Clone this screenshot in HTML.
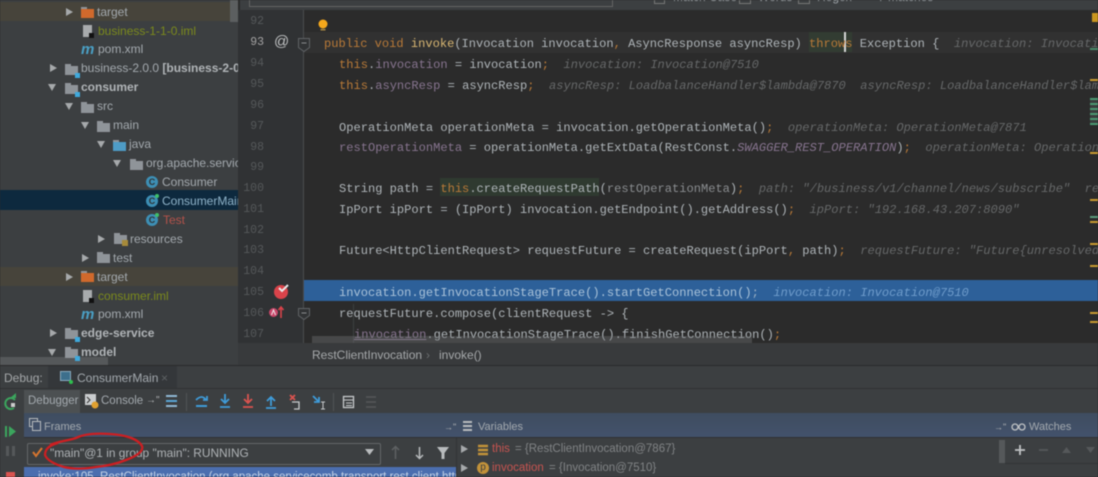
<!DOCTYPE html>
<html><head><meta charset="utf-8"><style>
html,body{margin:0;padding:0;background:#2b2b2b}
#r{position:relative;width:1098px;height:477px;overflow:hidden;background:#2b2b2b;font-family:"Liberation Sans",sans-serif;filter:blur(.55px)}
.a{position:absolute}
.t{position:absolute;white-space:nowrap;font-size:12px;line-height:16px;color:#a3a9ae}
.b{font-weight:bold;color:#b0b4b7}
.c{position:absolute;white-space:pre;font-family:"Liberation Mono",monospace;font-size:12.07px;line-height:16px;color:#aeb4b8;left:339px}
.n{position:absolute;left:240px;width:24px;text-align:right;font-family:"Liberation Mono",monospace;font-size:11.5px;line-height:14px;color:#55585a}
.k{color:#b97a38}.i{font-style:italic;color:#666869}.p{color:#87748f}.d{color:#707374}
.tri-r{position:absolute;width:0;height:0;border-left:7px solid #a6a9ab;border-top:4px solid transparent;border-bottom:4px solid transparent}
.tri-d{position:absolute;width:0;height:0;border-top:7px solid #a6a9ab;border-left:4.5px solid transparent;border-right:4.5px solid transparent}
.f{position:absolute;width:13px;height:9px;background:#8f9499}
.f:before{content:"";position:absolute;left:0;top:-2px;width:6px;height:2px;background:#8f9499}
.mod:after{content:"";position:absolute;right:-2px;bottom:-3px;width:5px;height:5px;background:#3fa9dc}
.cl{position:absolute;width:12px;height:12px;border-radius:50%;background:#3d8fb5;color:#2f3335;font:bold 9px/12px "Liberation Sans",sans-serif;text-align:center}
.g:after{content:"";position:absolute;right:-1px;top:-1px;width:4px;height:4px;background:#3fbf6a;border-radius:50%}
.m{position:absolute;font:italic bold 15px/14px "Liberation Sans",sans-serif;color:#4a9fc4}
.iml{position:absolute;width:9px;height:12px;background:#a8abad}
.iml:after{content:"";position:absolute;right:-2px;bottom:-1px;width:5px;height:5px;background:#111}
.mk{position:absolute;left:1090px;width:8px;height:2px;background:#c99a2e}
</style></head><body><div id="r">

<!-- top toolbar strip -->
<div class="a" style="left:240px;top:0;width:858px;height:10px;background:#3c3f41"></div>
<div class="a" style="left:249px;top:-4px;width:362px;height:9px;border:1px solid #646464"></div>
<div class="a" style="left:654px;top:-4px;width:9px;height:6px;border:1px solid #777"></div>
<div class="t" style="left:673px;top:-11px">Match Case</div>
<div class="a" style="left:739px;top:-4px;width:10px;height:6px;border:1px solid #777"></div>
<div class="t" style="left:758px;top:-11px">Words</div>
<div class="a" style="left:798px;top:-4px;width:10px;height:6px;border:1px solid #777"></div>
<div class="t" style="left:817px;top:-11px">Regex</div>
<div class="t" style="left:878px;top:-11px">7 matches</div>

<!-- project tree -->
<div class="a" style="left:0;top:0;width:238px;height:365px;background:#3c3f41"></div>
<div class="a" style="left:0;top:2px;width:238px;height:19px;background:#47443b"></div>
<div class="a" style="left:0;top:267px;width:238px;height:19px;background:#47443b"></div>
<div class="a" style="left:0;top:190px;width:238px;height:20px;background:#0d293e"></div>
<div class="a" style="left:230px;top:0;width:8px;height:22px;background:#5c5f60"></div>
<div class="a" style="left:0;top:357px;width:108px;height:8px;background:#55585a"></div>

<div class="tri-r" style="left:66px;top:8px"></div>
<div class="f" style="left:81px;top:9px;background:#d0692c"></div>
<div class="t" style="left:97px;top:4px">target</div>
<div class="iml" style="left:83px;top:25px"></div>
<div class="t" style="left:98px;top:23px;color:#7b8a1c">business-1-1-0.iml</div>
<div class="m" style="left:81px;top:43px">m</div>
<div class="t" style="left:98px;top:41px">pom.xml</div>
<div class="tri-r" style="left:50px;top:64px"></div>
<div class="f mod" style="left:65px;top:66px"></div>
<div class="t" style="left:81px;top:60px;width:157px;overflow:hidden">business-2.0.0 <span class="b">[business-2-0-0]</span></div>
<div class="tri-d" style="left:48px;top:84px"></div>
<div class="f mod" style="left:65px;top:85px"></div>
<div class="t b" style="left:81px;top:79px">consumer</div>
<div class="tri-d" style="left:65px;top:103px"></div>
<div class="f" style="left:81px;top:104px"></div>
<div class="t" style="left:97px;top:98px">src</div>
<div class="tri-d" style="left:81px;top:122px"></div>
<div class="f" style="left:97px;top:123px"></div>
<div class="t" style="left:113px;top:117px">main</div>
<div class="tri-d" style="left:97px;top:141px"></div>
<div class="f" style="left:113px;top:142px;background:#4e9cc6"></div>
<div class="t" style="left:129px;top:136px">java</div>
<div class="tri-d" style="left:113px;top:160px"></div>
<div class="f" style="left:130px;top:161px"></div>
<div class="t" style="left:146px;top:155px;width:92px;overflow:hidden">org.apache.servicecomb</div>
<div class="cl" style="left:146px;top:176px">C</div>
<div class="t" style="left:162px;top:174px">Consumer</div>
<div class="cl g" style="left:146px;top:195px">C</div>
<div class="t" style="left:162px;top:193px;width:76px;overflow:hidden;color:#8fb3c9">ConsumerMain</div>
<div class="cl g" style="left:146px;top:214px">C</div>
<div class="t" style="left:163px;top:212px;color:#b4524a">Test</div>
<div class="tri-r" style="left:98px;top:235px"></div>
<div class="f" style="left:114px;top:235px"></div>
<div class="a" style="left:122px;top:240px;width:6px;height:6px;background:#a68a3a"></div>
<div class="t" style="left:130px;top:231px">resources</div>
<div class="tri-r" style="left:82px;top:254px"></div>
<div class="f" style="left:97px;top:254px"></div>
<div class="t" style="left:113px;top:250px">test</div>
<div class="tri-r" style="left:66px;top:273px"></div>
<div class="f" style="left:81px;top:273px;background:#d0692c"></div>
<div class="t" style="left:97px;top:269px">target</div>
<div class="iml" style="left:83px;top:290px"></div>
<div class="t" style="left:98px;top:288px;color:#7b8a1c">consumer.iml</div>
<div class="m" style="left:81px;top:308px">m</div>
<div class="t" style="left:98px;top:306px">pom.xml</div>
<div class="tri-r" style="left:50px;top:329px"></div>
<div class="f mod" style="left:65px;top:330px"></div>
<div class="t b" style="left:81px;top:325px">edge-service</div>
<div class="tri-d" style="left:48px;top:349px"></div>
<div class="f mod" style="left:65px;top:349px"></div>
<div class="t b" style="left:81px;top:344px">model</div>

<!-- gutter -->
<div class="a" style="left:238px;top:10px;width:65px;height:335px;background:#303234"></div>
<div class="a" style="left:303px;top:10px;width:1px;height:335px;background:#4a4c4e"></div>
<div class="a" style="left:304px;top:32px;width:794px;height:21px;background:#313131"></div>
<div class="a" style="left:809px;top:32px;width:43px;height:20px;background:#323c32"></div>
<div class="a" style="left:844px;top:32px;width:2px;height:20px;background:#d6d6d6"></div>
<div class="a" style="left:440px;top:178px;width:159px;height:18px;background:#2f3a30"></div>
<div class="a" style="left:304px;top:280px;width:794px;height:21px;background:#2d6099"></div>

<div class="n" style="top:15px">92</div>
<div class="n" style="top:36px;color:#a4a3a3">93</div>
<div class="n" style="top:57px">94</div>
<div class="n" style="top:78px">95</div>
<div class="n" style="top:99px">96</div>
<div class="n" style="top:120px">97</div>
<div class="n" style="top:141px">98</div>
<div class="n" style="top:161px">99</div>
<div class="n" style="top:182px">100</div>
<div class="n" style="top:203px">101</div>
<div class="n" style="top:224px">102</div>
<div class="n" style="top:244px">103</div>
<div class="n" style="top:265px">104</div>
<div class="n" style="top:286px">105</div>
<div class="n" style="top:307px">106</div>
<div class="n" style="top:328px">107</div>

<div class="a" style="left:274px;top:33px;font:15px/18px 'Liberation Sans',sans-serif;color:#bfc1c2">@</div>

<svg class="a" style="left:0;top:0" width="1098" height="477">
 <circle cx="323" cy="24" r="4.5" fill="#f5a81c"/>
 <rect x="320.500" y="29" width="5" height="1.500" fill="#a98a44"/>
 <path d="M298.500 38.500h11v9l-5.500 4-5.500-4z" fill="#313335" stroke="#606366"/>
 <path d="M301.500 43h5" stroke="#8a8d8f"/>
 <path d="M298.500 308.500h11v7l-5.500 4-5.500-4z" fill="#313335" stroke="#606366"/>
 <path d="M301.500 313h5" stroke="#8a8d8f"/>
 <circle cx="281" cy="292" r="7" fill="#d9434a"/>
 <path d="M279 288l3 3 6-6" stroke="#e8e8e8" stroke-width="2" fill="none"/>
 <circle cx="273.500" cy="312.500" r="4.500" fill="#c9466a"/>
 <path d="M271.500 315l2-5 2 5" stroke="#eee" fill="none"/>
 <path d="M281 318v-11M278.500 310l2.500-3 2.500 3" stroke="#d9434a" stroke-width="1.600" fill="none"/>
 <path d="M353.500 304v40" stroke="#3d3f40"/>
</svg>

<!-- code -->
<div class="c" style="left:324px;top:36px"><span class="k">public void </span><span style="color:#d8b672">invoke</span>(Invocation invocation<span class="k">,</span> AsyncResponse asyncResp) <span class="k">throws</span> Exception {  <span class="i">invocation: Invocation@7510</span></div>
<div class="c" style="top:57px"><span class="k">this</span>.<span class="p">invocation</span> = invocation<span class="k">;</span>  <span class="i">invocation: Invocation@7510</span></div>
<div class="c" style="top:78px"><span class="k">this</span>.<span class="p">asyncResp</span> = asyncResp<span class="k">;</span>  <span class="i">asyncResp: LoadbalanceHandler$lambda@7870  asyncResp: LoadbalanceHandler$lambda@7870</span></div>
<div class="c" style="top:120px">OperationMeta operationMeta = invocation.getOperationMeta()<span class="k">;</span>  <span class="i">operationMeta: OperationMeta@7871</span></div>
<div class="c" style="top:140px"><span class="p">restOperationMeta</span> = operationMeta.getExtData(RestConst.<span class="p" style="font-style:italic">SWAGGER_REST_OPERATION</span>)<span class="k">;</span>  <span class="i">operationMeta: OperationMeta@7871</span></div>
<div class="c" style="top:181px">String path = <span class="k">this</span>.createRequestPath(<span style="color:#8a8d90">restOperationMeta</span>)<span class="k">;</span>  <span class="i">path: "/business/v1/channel/news/subscribe"  restOperationMeta</span></div>
<div class="c" style="top:202px">IpPort ipPort = (IpPort) invocation.getEndpoint().getAddress()<span class="k">;</span>  <span class="i">ipPort: "192.168.43.207:8090"</span></div>
<div class="c" style="top:243px">Future&lt;HttpClientRequest&gt; requestFuture = createRequest(ipPort<span class="k">,</span> path)<span class="k">;</span>  <span class="i">requestFuture: "Future{unresolved}"</span></div>
<div class="c" style="top:285px;color:#a9c2d9">invocation.getInvocationStageTrace().startGetConnection()<span style="color:#9ab0c4">;</span>  <span style="font-style:italic;color:#6f9ccb">invocation: Invocation@7510</span></div>
<div class="c" style="top:306px">requestFuture.compose(clientRequest -&gt; {</div>
<div class="c" style="left:354px;top:327px"><span class="p" style="text-decoration:underline">invocation</span>.getInvocationStageTrace().finishGetConnection()<span class="k">;</span></div>

<!-- error stripe -->
<div class="a" style="left:1092px;top:13px;width:6px;height:9px;background:#c9951f"></div>
<div class="mk" style="top:48px;background:#4a8a6a"></div>
<div class="mk" style="top:79px"></div>
<div class="a" style="left:1090px;top:98px;width:8px;height:27px;background:repeating-linear-gradient(#4a9a72 0 2px,#3a3d3d 2px 5px)"></div>
<div class="mk" style="top:152px"></div>
<div class="mk" style="top:199px"></div>
<div class="mk" style="top:216px;background:#5a9a7a"></div>
<div class="mk" style="top:221px"></div>
<div class="mk" style="top:243px"></div>
<div class="mk" style="top:265px"></div>
<div class="mk" style="top:312px"></div>
<div class="mk" style="top:321px"></div>

<!-- breadcrumb + hscroll -->
<div class="a" style="left:238px;top:343px;width:860px;height:22px;background:#383a3c"></div>
<div class="a" style="left:312px;top:336px;width:440px;height:7px;background:rgba(115,117,119,.4)"></div>
<div class="t" style="left:312px;top:347px;color:#a5a8aa">RestClientInvocation</div>
<div class="t" style="left:426px;top:347px;color:#6b6e70">›</div>
<div class="t" style="left:439px;top:347px;color:#a5a8aa">invoke()</div>

<!-- debug panel -->
<div class="a" style="left:0;top:365px;width:1098px;height:112px;background:#3c3f41"></div>
<div class="a" style="left:0;top:365px;width:1098px;height:1px;background:#2a2b2c"></div>
<div class="a" style="left:48px;top:366px;width:129px;height:23px;background:#34373a"></div>
<div class="a" style="left:0;top:388px;width:1098px;height:1px;background:#303234"></div>
<div class="t" style="left:4px;top:370px;color:#a5a8aa">Debug:</div>
<svg class="a" style="left:58px;top:369px" width="16" height="16"><rect x="2.500" y="2.500" width="10" height="9" fill="#3d6f8c" stroke="#88a9bc"/><circle cx="13" cy="13" r="2" fill="#2fbf4e"/></svg>
<div class="t" style="left:77px;top:370px;color:#a3a9ae">ConsumerMain</div>
<div class="t" style="left:161px;top:370px;color:#5f6365">×</div>

<!-- side tool column -->
<div class="a" style="left:0;top:389px;width:23px;height:88px;background:#3c3f41"></div>
<svg class="a" style="left:0;top:390px" width="24" height="87">
 <path d="M15 10a5.500 5.500 0 1 0-1 8" stroke="#3ba55d" stroke-width="2" fill="none"/><path d="M10 8h6V3z" fill="#3ba55d"/><rect x="11" y="13" width="4" height="4" fill="#ccc"/>
 <rect x="5" y="36" width="2" height="11" fill="#3ba55d"/><path d="M9 36l7 5.500-7 5.500z" fill="#3ba55d"/>
 <rect x="6" y="56" width="3" height="10" fill="#55585a"/><rect x="12" y="56" width="3" height="10" fill="#55585a"/>
 <rect x="6" y="82" width="9" height="9" fill="#d9534f"/>
</svg>

<!-- tab row -->
<div class="a" style="left:24px;top:390px;width:56px;height:23px;background:#4c5052"></div>
<div class="t" style="left:28px;top:393px;font-size:11.5px">Debugger</div>
<svg class="a" style="left:84px;top:392px" width="16" height="18"><rect x="1" y="2" width="11" height="11" fill="#c9ccce"/><path d="M3 5l3 3-3 3" stroke="#333" fill="none"/><circle cx="11" cy="13" r="3.500" fill="#e0a030"/></svg>
<div class="t" style="left:101px;top:393px;font-size:11.5px">Console</div>
<div class="t" style="left:146px;top:393px;font-size:10px;color:#b0b3b5">→"</div>
<svg class="a" style="left:160px;top:390px" width="220" height="24" fill="none">
 <path d="M6 6h11M6 11h11M6 16h11" stroke="#59a6d6" stroke-width="2"/><path d="M6 6h11M6 16h11" stroke="#8fb8d4" stroke-width="2"/>
 <path d="M26.500 3v18" stroke="#505355"/>
 <path d="M36 10q6-6 10 0M43 10h4V6" stroke="#3f9bd8" stroke-width="1.800"/><path d="M36 16h11" stroke="#3f9bd8" stroke-width="2"/>
 <path d="M65 4v9M61 9l4 4 4-4M60 17h10" stroke="#3f9bd8" stroke-width="1.800"/>
 <path d="M88 4v9M84 9l4 4 4-4M83 17h10" stroke="#d9534f" stroke-width="1.800"/>
 <path d="M111 16V7M107 11l4-4 4 4M106 18h10" stroke="#3f9bd8" stroke-width="1.800"/>
 <path d="M130 5l5 5M135 5l-5 5" stroke="#d9534f" stroke-width="1.800"/><path d="M132 12h7v7h-5" stroke="#c7cacc" stroke-width="1.300"/>
 <path d="M153 6l6 6M159 7v5h-5" stroke="#3f9bd8" stroke-width="1.800"/><path d="M163 12v7M161 12h4M161 19h4" stroke="#c7cacc"/>
 <path d="M173.500 3v18" stroke="#505355"/>
 <rect x="183.500" y="6.500" width="10" height="11" stroke="#c7cacc" stroke-width="1.300"/><path d="M184 10h9M186 13h6M186 15.500h6" stroke="#c7cacc"/>
 <path d="M206 7h10M206 12h10M206 17h10" stroke="#55585a" stroke-width="1.500"/>
</svg>

<!-- header band -->
<div class="a" style="left:24px;top:413px;width:1074px;height:25px;background:linear-gradient(#3f4d60,#43526c)"></div>
<div class="a" style="left:24px;top:437px;width:1074px;height:1px;background:#2f3133"></div>
<svg class="a" style="left:28px;top:417px" width="14" height="16" fill="none" stroke="#b8bbbd"><rect x="1.500" y="1.500" width="8" height="8"/><rect x="4.500" y="4.500" width="8" height="9" fill="#415069"/></svg>
<div class="t" style="left:44px;top:419px;font-size:11px">Frames</div>
<div class="t" style="left:444px;top:419px;font-size:9px;color:#b0b3b5">→"</div>
<svg class="a" style="left:463px;top:421px" width="10" height="11"><path d="M0 1h9M0 5h9M0 9h9" stroke="#b8bbbd" stroke-width="2"/></svg>
<div class="t" style="left:478px;top:419px;font-size:11px">Variables</div>
<div class="t" style="left:994px;top:419px;font-size:9px;color:#b0b3b5">→"</div>
<svg class="a" style="left:1011px;top:422px" width="16" height="10" fill="none" stroke="#c0c3c5" stroke-width="1.300"><circle cx="4" cy="5" r="3"/><circle cx="11" cy="5" r="3"/></svg>
<div class="t" style="left:1029px;top:419px;font-size:11px">Watches</div>

<!-- frames -->
<div class="a" style="left:26.500px;top:442.500px;width:352px;height:20px;border:1px solid #646668;border-radius:2px;background:#3c3f41"></div>
<svg class="a" style="left:30px;top:445px" width="16" height="14" fill="none"><path d="M3 7l3 4 6-8" stroke="#d5752f" stroke-width="2"/></svg>
<div class="t" style="left:50px;top:445px;color:#aeb2b5;font-size:11.9px">"main"@1 in group "main": RUNNING</div>
<svg class="a" style="left:365px;top:449px" width="10" height="7"><path d="M0 0h9L4.500 6z" fill="#b8bbbd"/></svg>
<svg class="a" style="left:390px;top:445px" width="60" height="16" fill="none"><path d="M5.500 2v12M2 5l3.500-3.500L9 5" stroke="#5e6163" stroke-width="1.500"/><path d="M29.500 2v12M26 10l3.500 3.500L33 10" stroke="#b8bbbd" stroke-width="1.500"/><path d="M47 2h12l-4.500 6v6h-3V8z" fill="#b8bbbd"/></svg>
<div class="a" style="left:24px;top:467px;width:432px;height:10px;background:#4b6eaf"></div>
<div class="t" style="left:38px;top:469px;color:#c5d3e6;width:418px;overflow:hidden;font-size:11.500px">invoke:105, RestClientInvocation (org.apache.servicecomb.transport.rest.client.http)</div>
<div class="a" style="left:456px;top:438px;width:1px;height:39px;background:#323436"></div>

<!-- variables -->
<div class="tri-r" style="left:461px;top:445px"></div>
<div class="tri-r" style="left:461px;top:464px"></div>
<svg class="a" style="left:477px;top:442px" width="14" height="35"><path d="M1 4h10M1 8h10M1 12h10" stroke="#c2923a" stroke-width="2.500"/><circle cx="6" cy="26" r="6" fill="#c2923a"/></svg>
<div class="a" style="left:477px;top:462px;width:12px;text-align:center;font:10px/12px 'Liberation Sans',sans-serif;color:#3c3f41">p</div>
<div class="t" style="left:492px;top:441px;color:#c75450;font-size:11.5px">this</div>
<div class="t" style="left:515px;top:441px;color:#808385;font-size:11.5px">= {RestClientInvocation@7867}</div>
<div class="t" style="left:492px;top:460px;color:#c75450;font-size:11.5px">invocation</div>
<div class="t" style="left:549px;top:460px;color:#808385;font-size:11.5px">= {Invocation@7510}</div>

<!-- watches -->
<div class="a" style="left:1005px;top:463px;width:93px;height:1px;background:#323436"></div>
<div class="a" style="left:999px;top:440px;width:6px;height:23px;background:#55585a"></div>
<svg class="a" style="left:1012px;top:442px" width="86" height="16" fill="none"><path d="M8 3v10M3 8h10" stroke="#c0c3c5" stroke-width="1.800"/><path d="M27 8h9" stroke="#55585a" stroke-width="1.800"/><path d="M50 11h9l-4.500-6z" fill="#55585a"/><path d="M74 5h9l-4.500 6z" fill="#55585a"/></svg>

<!-- red hand-drawn circle -->
<svg class="a" style="left:0;top:0" width="1098" height="477" fill="none"><path d="M50 445C58 441 67 441 76 438C84 434 96 433 110 434C126 435 138 439 142 446C144 452 134 457 126 460C116 464 106 466 96 467C84 469 72 469 64 467C54 464 47 460 45 455C45 449 50 445 58 443" stroke="#cc1f22" stroke-width="2.300"/></svg>

</div></body></html>
